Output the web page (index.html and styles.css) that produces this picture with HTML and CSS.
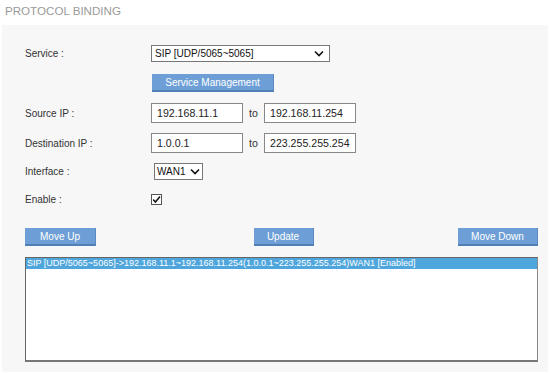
FILE: index.html
```html
<!DOCTYPE html>
<html>
<head>
    <meta charset="UTF-8">
    <title>Protocol Binding</title>
    <link rel="stylesheet" href="styles.css">
</head>
<body>
    <h1 class="page-title">PROTOCOL BINDING</h1>
    <div class="panel">
        <div class="row row-service">
            <div class="label">Service :</div>
            <div class="select select-service">
                <span>SIP [UDP/5065~5065]</span>
                <svg width="10" height="7" viewBox="0 0 10 7"><path d="M1 1.5 L5 5.5 L9 1.5" fill="none" stroke="#111" stroke-width="1.6"/></svg>
            </div>
        </div>
        <div class="row row-manage">
            <div class="label"></div>
            <button class="btn btn-manage">Service Management</button>
        </div>
        <div class="row row-ip">
            <div class="label">Source IP :</div>
            <input class="ip" type="text" value="192.168.11.1">
            <span class="to">to</span>
            <input class="ip" type="text" value="192.168.11.254">
        </div>
        <div class="row row-ip">
            <div class="label">Destination IP :</div>
            <input class="ip" type="text" value="1.0.0.1">
            <span class="to">to</span>
            <input class="ip" type="text" value="223.255.255.254">
        </div>
        <div class="row row-iface">
            <div class="label">Interface :</div>
            <div class="select select-iface">
                <span>WAN1</span>
                <svg width="10" height="7" viewBox="0 0 10 7"><path d="M1 1.5 L5 5.5 L9 1.5" fill="none" stroke="#111" stroke-width="1.6"/></svg>
            </div>
        </div>
        <div class="row row-enable">
            <div class="label">Enable :</div>
            <span class="check">
                <svg width="9" height="9" viewBox="0 0 9 9"><path d="M1.2 4.6 L3.4 7 L8 1.4" fill="none" stroke="#111" stroke-width="1.5"/></svg>
            </span>
        </div>
        <div class="actions">
            <button class="btn btn-up">Move Up</button>
            <button class="btn btn-update">Update</button>
            <button class="btn btn-down">Move Down</button>
        </div>
        <div class="rule-list">
            <div class="rule selected">SIP [UDP/5065~5065]-&gt;192.168.11.1~192.168.11.254(1.0.0.1~223.255.255.254)WAN1 [Enabled]</div>
        </div>
    </div>
</body>
</html>
```

FILE: styles.css
```css
body {
    margin: 0;
    padding: 0;
    background: #fff;
    font-family: "Liberation Sans", Arial, sans-serif;
    color: #333;
    width: 550px;
    height: 374px;
    overflow: hidden;
}
.page-title {
    margin: 0;
    height: 25px;
    padding: 4px 0 0 5px;
    box-sizing: border-box;
    font-size: 11.6px;
    font-weight: normal;
    color: #9a9a9a;
    line-height: 13px;
}
.panel {
    margin: 0 2px 0 2px;
    background: #f7f7f7;
    padding: 20px 10px 10px 23px;
    height: 347px;
    box-sizing: border-box;
}
.row {
    display: flex;
    align-items: center;
}
.label {
    width: 126px;
    flex: none;
    font-size: 10px;
    color: #333;
}
.row-service { height: 17px; }
.row-manage { height: 18px; margin-top: 12px; }
.row-ip { height: 20px; margin-top: 11px; }
.row-ip + .row-ip { margin-top: 10px; }
.row-iface { height: 17px; margin-top: 10px; }
.row-enable { height: 18px; margin-top: 10px; }

.select {
    display: flex;
    align-items: center;
    justify-content: space-between;
    background: #fff;
    border: 1px solid #777;
    box-sizing: border-box;
    height: 17px;
    padding: 0 5px 0 3px;
    font-size: 10px;
    color: #111;
}
.select-service { width: 179px; }
.select-iface { width: 49px; margin-left: 3px; padding: 0 2px 0 2px; }

.ip {
    width: 92px;
    height: 20px;
    box-sizing: border-box;
    border: 1px solid #888;
    background: #fff;
    font-family: "Liberation Sans", Arial, sans-serif;
    font-size: 10.6px;
    color: #222;
    padding: 0 5px;
    margin: 0;
    outline: none;
}
.to {
    width: 21px;
    font-size: 10.6px;
    color: #333;
    text-align: center;
}

.check {
    width: 11px;
    height: 11px;
    box-sizing: border-box;
    border: 1px solid #555;
    background: #fff;
    display: flex;
    align-items: center;
    justify-content: center;
}

.btn {
    background: #6d9fd6;
    color: #fff;
    border: none;
    border-bottom: 2px solid #4f7fb4;
    border-right: 1px solid #5a8ac0;
    height: 18px;
    padding: 0;
    font-family: "Liberation Sans", Arial, sans-serif;
    font-size: 10px;
    box-sizing: border-box;
    cursor: pointer;
}
.btn-manage { width: 122px; margin-left: 1px; }
.actions {
    display: flex;
    justify-content: space-between;
    align-items: center;
    margin-top: 20px;
    width: 513px;
}
.btn-up { width: 71px; }
.btn-update { width: 60px; margin-left: 13px; }
.btn-down { width: 80px; }

.rule-list {
    margin-top: 11px;
    width: 513px;
    height: 105px;
    box-sizing: border-box;
    background: #fff;
    border: 1px solid #666;
    border-right-color: #888;
    border-bottom: 2px solid #777;
}
.rule {
    font-size: 9px;
    line-height: 11px;
    height: 11px;
    padding-left: 1px;
    white-space: nowrap;
    overflow: hidden;
}
.rule.selected {
    background: #4ea6dc;
    color: #fff;
}
```
